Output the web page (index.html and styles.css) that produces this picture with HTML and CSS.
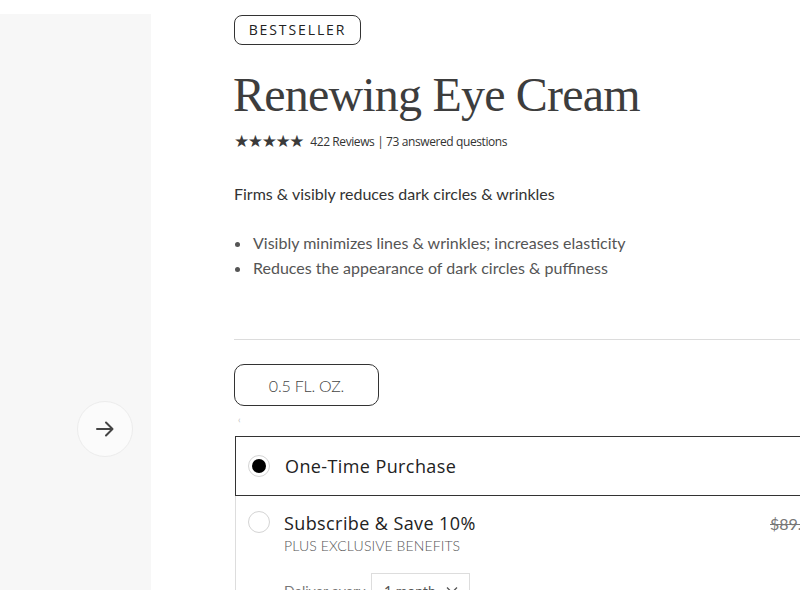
FILE: index.html
```html
<!DOCTYPE html>
<html>
<head>
<meta charset="utf-8">
<link rel="stylesheet" href="styles.css">
</head>
<body>
<div class="page">
  <aside class="gallery">
    <button class="next" aria-label="Next">
      <svg width="22" height="22" viewBox="0 0 22 22" fill="none" stroke="#444" stroke-width="2" stroke-linecap="round" stroke-linejoin="round"><path d="M3 11h15M12 4.5l6.5 6.5-6.5 6.5"/></svg>
    </button>
  </aside>
  <main class="info">
    <span class="badge">BESTSELLER</span>
    <h1 class="title">Renewing Eye Cream</h1>
    <div class="rating">
      <span class="stars">★★★★★</span>
      <span class="reviews">422 Reviews | 73 answered questions</span>
    </div>
    <p class="tagline">Firms &amp; visibly reduces dark circles &amp; wrinkles</p>
    <ul class="benefits">
      <li>Visibly minimizes lines &amp; wrinkles; increases elasticity</li>
      <li>Reduces the appearance of dark circles &amp; puffiness</li>
    </ul>
    <hr class="divider">
    <button class="size">0.5 FL. OZ.</button>
    <div class="tiny">‹</div>
    <div class="options">
      <div class="option selected">
        <span class="radio on"></span>
        <span class="opt-title">One-Time Purchase</span>
      </div>
      <div class="option sub">
        <span class="radio"></span>
        <div class="sub-body">
          <span class="opt-title">Subscribe &amp; Save 10%</span>
          <span class="opt-note">PLUS EXCLUSIVE BENEFITS</span>
          <div class="deliver">
            <span class="deliver-label">Deliver every</span>
            <span class="select">1 month <svg width="12" height="8" viewBox="0 0 12 8" fill="none" stroke="#555" stroke-width="1.3"><path d="M1 1.5l5 5 5-5"/></svg></span>
          </div>
        </div>
        <span class="old-price">$89.00</span>
      </div>
    </div>
  </main>
</div>
</body>
</html>
```
FILE: styles.css
```css
* { box-sizing: border-box; }
html, body { margin: 0; padding: 0; background: #fff; overflow: hidden; }
body { width: 800px; height: 590px; font-family: "Lato", "Open Sans", sans-serif; color: #333; }
.page { display: flex; height: 590px; }
.gallery {
  width: 151px; flex: none; margin-top: 14px; background: #f7f7f7;
  position: relative;
}
.next {
  position: absolute; left: 77px; top: 387px;
  width: 56px; height: 56px; border-radius: 50%;
  background: #fbfbfb; border: 1px solid #ececec;
  display: flex; align-items: center; justify-content: center; padding: 0;
}
.info { margin-left: 83px; flex: 1; min-width: 0; padding-top: 15px; }
.badge {
  display: inline-block; border: 1px solid #333; border-radius: 8px;
  height: 30px; width: 127px; text-align: center; line-height: 28px;
  font-family: "Open Sans", sans-serif; font-size: 14px; letter-spacing: 1.9px; color: #222; font-weight: 500;
}
.title {
  margin: 22px 0 0 -1px; font-family: "Liberation Serif", serif; font-weight: 400;
  font-size: 48px; line-height: 56px; color: #3d3d3d; letter-spacing: -0.8px;
}
.rating { display: flex; align-items: center; margin-top: 7px; height: 22px; }
.stars { font-family: "DejaVu Sans", sans-serif; font-size: 17px; letter-spacing: -1.4px; color: #3a3a3a; }
.reviews { margin-left: 7px; font-family: "Open Sans", sans-serif; font-size: 12px; color: #333; letter-spacing: -0.4px; }
.tagline { margin: 32px 0 0; font-size: 16px; color: #333; line-height: 20px; }
.benefits { margin: 26px 0 0; padding-left: 18px; font-size: 16px; line-height: 25px; color: #555; }
.benefits li { padding-left: 1px; }
.divider { margin: 59px 0 0; border: 0; border-top: 1px solid #dcdcdc; }
.size {
  display: block; margin-top: 24px; width: 145px; height: 42px;
  border: 1px solid #333; border-radius: 10px; background: #fff;
  font-family: "Lato", sans-serif; font-weight: 300; font-size: 16px; color: #444; letter-spacing: -0.2px;
}
.tiny { font-size: 9px; color: #bbb; height: 30px; line-height: 28px; padding-left: 4px; }
.options { margin-left: 1px; }
.option { display: flex; align-items: flex-start; }
.option.selected { height: 60px; border: 1.5px solid #333; border-right: 0; align-items: center; padding-left: 12px; }
.option.sub { border-left: 1px solid #ddd; padding: 15px 0 0 12px; height: 120px; }
.radio { width: 22px; height: 22px; border-radius: 50%; border: 1px solid #d4d4d4; flex: none; position: relative; background: #fff; }
.radio.on::after { content: ""; position: absolute; left: 3px; top: 3px; width: 14px; height: 14px; border-radius: 50%; background: #000; }
.opt-title { margin-left: 15px; font-family: "Open Sans", sans-serif; font-size: 18px; color: #222; letter-spacing: 0.4px; }
.sub .opt-title { margin-left: 0; display: block; line-height: 24px; }
.sub-body { margin-left: 14px; flex: 1; }
.opt-note { display: block; font-size: 14px; font-weight: 300; color: #555; letter-spacing: 0.1px; margin-top: 2px; }
.deliver { display: flex; align-items: center; margin-top: 19px; }
.deliver-label { font-size: 14px; color: #777; width: 87px; }
.select { display: flex; align-items: center; gap: 10px; height: 34px; width: 99px; border: 1px solid #ddd; padding-left: 12px; font-size: 14px; color: #555; }
.old-price { font-size: 16px; color: #777; text-decoration: line-through; width: 30px; overflow: hidden; white-space: nowrap; margin-top: 3px; flex: none; }
```
